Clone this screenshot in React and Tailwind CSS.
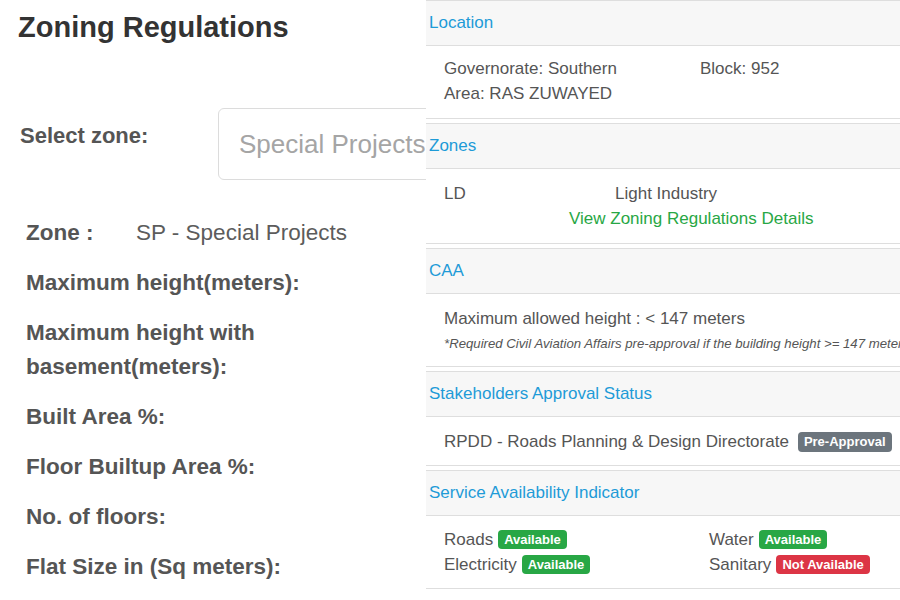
const regulationRows = [
  { label: "Maximum height(meters):" },
  { label: "Maximum height with basement(meters):" },
  { label: "Built Area %:" },
  { label: "Floor Builtup Area %:" },
  { label: "No. of floors:" },
  { label: "Flat Size in (Sq meters):" },
];

function Badge({ tone, children }) {
  const tones = {
    gray: "bg-[#6c757d]",
    green: "bg-[#28a745]",
    red: "bg-[#dc3545]",
  };
  return (
    <span
      className={`inline-block h-[19px] rounded-[4px] px-[6px] text-[13px] font-bold leading-[19px] text-white ${tones[tone]}`}
    >
      {children}
    </span>
  );
}

// body padding differs a little per card, so it is passed in
function Card({ title, children, first, bodyClass = "pt-[12px] pb-[11px]" }) {
  return (
    <div className={`border-y border-[#dedede] ${first ? "" : "mt-[4px]"}`}>
      <div className="flex h-[45px] items-center border-b border-[#dedede] bg-[#f7f7f7] pl-[3px] text-[#1e9bd7]">
        {title}
      </div>
      <div className={`pl-[18px] leading-[25px] text-[#555] ${bodyClass}`}>{children}</div>
    </div>
  );
}

function ZoningPanel() {
  return (
    <div className="w-[426px] shrink-0 overflow-hidden pt-[10px]">
      <h1 className="pl-[18px] text-[29px] font-bold leading-[34px] text-[#333]">
        Zoning Regulations
      </h1>

      <div className="mt-[64px] flex items-start">
        <label className="mt-[15px] w-[218px] shrink-0 pl-[20px] text-[22px] font-bold leading-[26px] text-[#555]">
          Select zone:
        </label>
        <div className="flex h-[72px] w-[300px] shrink-0 items-center rounded-[6px] border border-[#dcdcdc] pl-[20px] text-[26px] text-[#a5a5a5]">
          <span className="whitespace-nowrap">Special Projects</span>
        </div>
      </div>

      <div className="mt-[36px] flex flex-col gap-[16px] pl-[26px] text-[22.5px] leading-[34px] text-[#555]">
        <div className="flex">
          <span className="w-[110px] shrink-0 font-bold">Zone :</span>
          <span className="text-[#5c5c5c]">SP - Special Projects</span>
        </div>
        {regulationRows.map((row) => (
          <div key={row.label} className="w-[300px] font-bold">
            {row.label}
          </div>
        ))}
      </div>
    </div>
  );
}

function DetailsPanel() {
  return (
    <div className="flex-1 overflow-hidden text-[17px]">
      <Card title="Location" first bodyClass="pt-[10px] pb-[12px]">
        <div className="flex">
          <span className="w-[256px] shrink-0">Governorate: Southern</span>
          <span>Block: 952</span>
        </div>
        <div>Area: RAS ZUWAYED</div>
      </Card>

      <Card title="Zones" bodyClass="pt-[12px] pb-[12px]">
        <div className="flex">
          <span className="w-[171px] shrink-0">LD</span>
          <span>Light Industry</span>
        </div>
        <div className="pl-[125px] text-[#28a745]">View Zoning Regulations Details</div>
      </Card>

      <Card title="CAA" bodyClass="pt-[12px] pb-[10px]">
        <div>Maximum allowed height : &lt; 147 meters</div>
        <div className="whitespace-nowrap text-[13.2px] italic">
          *Required Civil Aviation Affairs pre-approval if the building height &gt;= 147 meters
        </div>
      </Card>

      <Card title="Stakeholders Approval Status">
        <div className="flex items-center gap-[9px] whitespace-nowrap">
          <span>RPDD - Roads Planning &amp; Design Directorate</span>
          <span className="inline-block h-[20px] rounded-[4px] bg-[#6c757d] px-[6px] text-[13px] font-bold leading-[20px] text-white">
            Pre-Approval
          </span>
        </div>
      </Card>

      <Card title="Service Availability Indicator" bodyClass="pt-[11px] pb-[11px]">
        <div className="grid grid-cols-[265px_1fr]">
          <div className="flex items-center gap-[5px]">
            Roads <Badge tone="green">Available</Badge>
          </div>
          <div className="flex items-center gap-[5px]">
            Water <Badge tone="green">Available</Badge>
          </div>
          <div className="flex items-center gap-[5px]">
            Electricity <Badge tone="green">Available</Badge>
          </div>
          <div className="flex items-center gap-[5px]">
            Sanitary <Badge tone="red">Not Available</Badge>
          </div>
        </div>
      </Card>
    </div>
  );
}

export default function App() {
  return (
    <div className="flex h-[600px] w-[900px] overflow-hidden bg-white font-['Liberation_Sans',Arial,sans-serif]">
      <ZoningPanel />
      <DetailsPanel />
    </div>
  );
}
